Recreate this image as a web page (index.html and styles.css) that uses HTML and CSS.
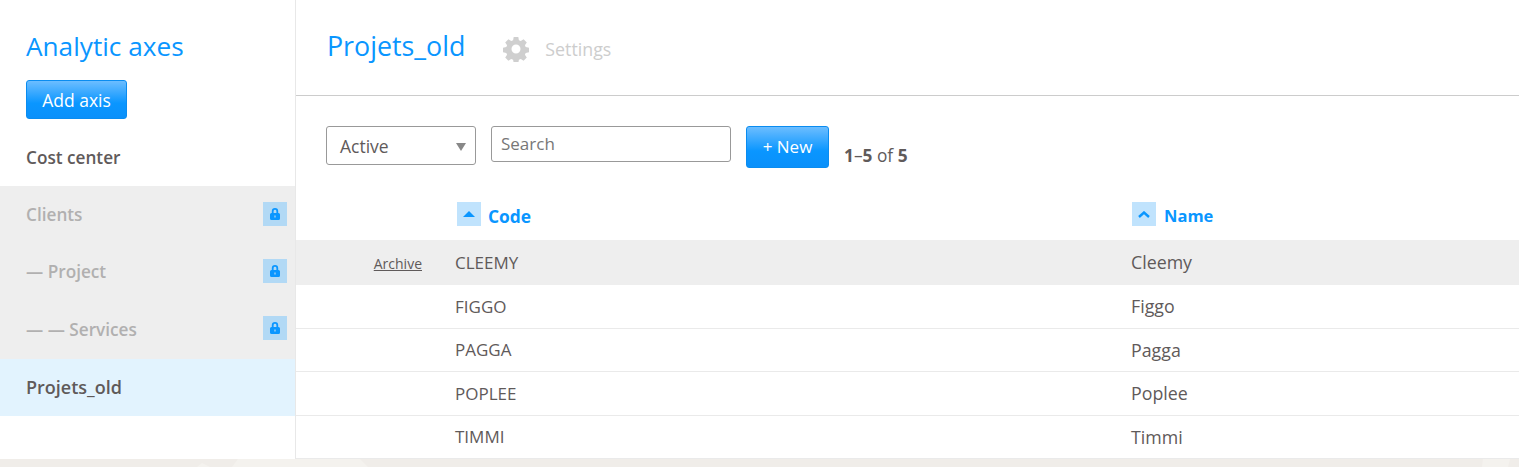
FILE: index.html
```html
<!DOCTYPE html>
<html lang="en">
<head>
<meta charset="utf-8">
<title>Analytic axes</title>
<link rel="stylesheet" href="styles.css">
</head>
<body>
<div class="app">
  <aside class="sidebar">
    <h2 class="side-title">Analytic axes</h2>
    <button class="btn btn-add">Add axis</button>
    <ul class="axes">
      <li class="axis"><span>Cost center</span></li>
      <li class="axis locked"><span>Clients</span><span class="lock"><svg width="12" height="14" viewBox="0 0 12 14"><path fill="#0a96ff" fill-rule="evenodd" d="M2.800 6V4.200a3.200 3.200 0 0 1 6.400 0V6h.3A1.500 1.500 0 0 1 11 7.500v4A1.500 1.500 0 0 1 9.500 13h-7A1.500 1.500 0 0 1 1 11.500v-4A1.500 1.500 0 0 1 2.500 6h.3zm1.800 0h2.800V4.200a1.400 1.400 0 0 0-2.800 0V6zM5.400 8.500v2h1.200v-2H5.400z"/></svg></span></li>
      <li class="axis locked"><span>— Project</span><span class="lock"><svg width="12" height="14" viewBox="0 0 12 14"><path fill="#0a96ff" fill-rule="evenodd" d="M2.800 6V4.200a3.200 3.200 0 0 1 6.400 0V6h.3A1.500 1.500 0 0 1 11 7.500v4A1.500 1.500 0 0 1 9.500 13h-7A1.500 1.500 0 0 1 1 11.500v-4A1.500 1.500 0 0 1 2.500 6h.3zm1.800 0h2.800V4.200a1.400 1.400 0 0 0-2.800 0V6zM5.400 8.500v2h1.200v-2H5.400z"/></svg></span></li>
      <li class="axis locked"><span>— — Services</span><span class="lock"><svg width="12" height="14" viewBox="0 0 12 14"><path fill="#0a96ff" fill-rule="evenodd" d="M2.800 6V4.200a3.200 3.200 0 0 1 6.400 0V6h.3A1.500 1.500 0 0 1 11 7.500v4A1.500 1.500 0 0 1 9.500 13h-7A1.500 1.500 0 0 1 1 11.500v-4A1.500 1.500 0 0 1 2.500 6h.3zm1.800 0h2.800V4.200a1.400 1.400 0 0 0-2.800 0V6zM5.400 8.500v2h1.200v-2H5.400z"/></svg></span></li>
      <li class="axis current"><span>Projets_old</span></li>
    </ul>
  </aside>
  <main class="content">
    <header class="head">
      <h1 class="page-title">Projets_old</h1>
      <a class="settings"><svg width="26" height="26" viewBox="0 0 26 26"><path fill="#cfcfcf" fill-rule="evenodd" d="M10.700 1h4.600l.6 3.300 1.900.8 2.800-1.900 3.200 3.200-1.900 2.800.8 1.900 3.300.6v4.600l-3.300.6-.8 1.900 1.900 2.800-3.200 3.200-2.800-1.900-1.900.8-.6 3.300h-4.600l-.6-3.300-1.900-.8-2.800 1.900-3.200-3.200 1.900-2.800-.8-1.900-3.300-.6v-4.600l3.300-.6.800-1.900-1.900-2.800 3.200-3.200 2.800 1.900 1.900-.8zM13 8.500a4.500 4.500 0 1 0 0 9 4.500 4.500 0 0 0 0-9z"/></svg><span>Settings</span></a>
    </header>
    <div class="toolbar">
      <div class="select">Active<span class="caret"></span></div>
      <div class="search">Search</div>
      <button class="btn btn-new">+ New</button>
      <div class="count"><b>1</b>–<b>5</b> of <b>5</b></div>
    </div>
    <div class="table">
      <div class="row heading">
        <div class="c-act"></div>
        <div class="c-code"><span class="sort"><svg width="12" height="6" viewBox="0 0 12 6"><path fill="#0a96ff" d="M6 0l6 6H0z"/></svg></span>Code</div>
        <div class="c-name"><span class="sort"><svg width="12" height="7" viewBox="0 0 12 7"><path fill="none" stroke="#0a96ff" stroke-width="2.400" d="M1 6l5-4.500L11 6"/></svg></span>Name</div>
      </div>
      <div class="row hover">
        <div class="c-act"><a class="archive">Archive</a></div>
        <div class="c-code">CLEEMY</div>
        <div class="c-name">Cleemy</div>
      </div>
      <div class="row">
        <div class="c-act"></div>
        <div class="c-code">FIGGO</div>
        <div class="c-name">Figgo</div>
      </div>
      <div class="row">
        <div class="c-act"></div>
        <div class="c-code">PAGGA</div>
        <div class="c-name">Pagga</div>
      </div>
      <div class="row">
        <div class="c-act"></div>
        <div class="c-code">POPLEE</div>
        <div class="c-name">Poplee</div>
      </div>
      <div class="row">
        <div class="c-act"></div>
        <div class="c-code">TIMMI</div>
        <div class="c-name">Timmi</div>
      </div>
    </div>
  </main>
</div>
<svg class="band" width="1519" height="8" viewBox="0 0 1519 8"><path fill="#f4f2ee" d="M238 0h122l8 8H232zM197 8l5-4 8 4zM1483 0h27l-2 8h-26z"/></svg>
</body>
</html>
```
FILE: styles.css
```css
* { box-sizing: border-box; }
html, body { margin: 0; height: 467px; overflow: hidden; }
body {
  background: #fff;
  color: #5f5a5a;
  font-family: "Open Sans", "Noto Sans", sans-serif;
  font-size: 16px;
}
.app { display: flex; height: 459px; overflow: hidden; }
.band { display: block; width: 100%; height: 8px; background: #f0ede9; }

.sidebar { width: 296px; flex: none; border-right: 1px solid #e8e8e8; }
.side-title {
  margin: 0;
  padding: 29px 0 0 26px;
  height: 80px;
  color: #0a96ff;
  font-size: 26.200px;
  line-height: 34px;
  font-weight: 400;
}
.btn {
  display: block;
  color: #fff;
  border: 1px solid #0a8cf0;
  border-radius: 3px;
  background: linear-gradient(#6cbdff, #0a96ff 60%, #0a90fa);
  font: inherit;
  padding: 0;
}
.btn-add { width: 101px; height: 39px; margin-left: 26px; font-size: 17.500px; }
.axes { list-style: none; margin: 10px 0 0; padding: 0; }
.axis {
  height: 57.400px;
  padding: 0 8px 0 26px;
  display: flex;
  align-items: center;
  justify-content: space-between;
  font-weight: 600;
  font-size: 17.200px;
}
.axis > span:first-child { margin-bottom: 1px; }
.axis.locked { background: #eee; color: #b1b0b0; }
.axis.current { background: #e2f3fe; font-size: 18px; }
.lock {
  width: 24px; height: 24px;
  background: #b2d9f5;
  display: flex; align-items: center; justify-content: center;
  margin-top: -3px;
}

.content { flex: 1; min-width: 0; }
.head {
  height: 96px;
  border-bottom: 1px solid #ccc;
  display: flex;
  align-items: flex-start;
  padding: 29px 0 0 31px;
}
.page-title {
  margin: 0;
  color: #0a96ff;
  font-size: 26.800px;
  line-height: 34px;
  font-weight: 400;
}
.settings {
  display: flex;
  align-items: center;
  gap: 16px;
  margin: 7px 0 0 38px;
  color: #cdcdcd;
  font-size: 17.800px;
}
.toolbar {
  display: flex;
  align-items: flex-start;
  padding: 30px 0 0 30px;
  height: 94px;
}
.select {
  position: relative;
  width: 150px; height: 39px;
  border: 1px solid #999;
  border-radius: 3px;
  padding-left: 13px;
  line-height: 38px;
  font-size: 17.500px;
}
.caret {
  position: absolute;
  right: 9px; top: 16px;
  border: 5px solid transparent;
  border-top: 8px solid #888;
  border-bottom: 0;
}
.search {
  width: 240px; height: 36px;
  margin-left: 15px;
  border: 1px solid #999;
  border-radius: 3px;
  padding-left: 9px;
  line-height: 34px;
  color: #777;
  font-size: 17px;
}
.btn-new { width: 83px; height: 42px; margin-left: 15px; font-size: 17px; padding-bottom: 2px; }
.count { margin: 19px 0 0 15px; font-size: 17.300px; line-height: 22px; }
.count b { font-weight: 700; }

.row {
  display: flex;
  align-items: center;
  height: 43.500px;
  border-bottom: 1px solid #eaeaea;
  font-size: 17px;
}
.row.heading {
  height: 50px;
  border: 0;
  color: #0a96ff;
  font-weight: 700;
  font-size: 17.400px;
}
.row.hover { height: 45px; background: #eee; border: 0; padding-bottom: 1px; }
.c-act { width: 126px; flex: none; text-align: right; }
.c-code { width: 676px; flex: none; margin-left: 33px; display: flex; align-items: center; }
.c-name { flex: 1; display: flex; align-items: center; font-size: 17.800px; }
.heading .c-code { padding-top: 2px; }
.heading .c-name { font-size: 16.500px; }
.sort {
  width: 24px; height: 24px;
  background: #c0e3fd;
  margin: -4px 7px 0 2px;
  display: flex; align-items: center; justify-content: center;
}
.c-name .sort { margin: -2px 8px 0 1px; }
.archive { font-size: 14px; text-decoration: underline; }
```
